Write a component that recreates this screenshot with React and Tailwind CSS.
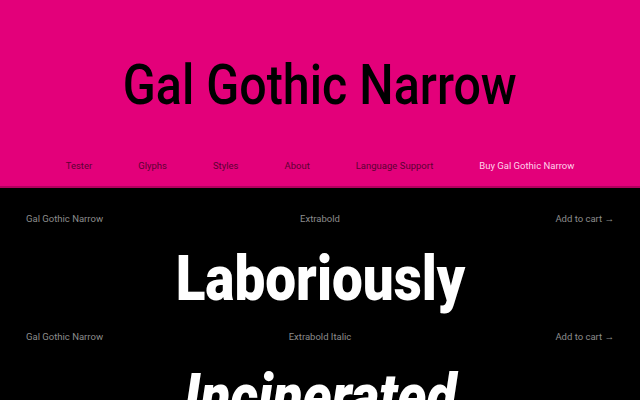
export default function App() {
  const roboto = { fontFamily: 'Roboto, "Liberation Sans", Arial, sans-serif' };
  const nav = ["Tester", "Glyphs", "Styles", "About", "Language Support"];
  const rows = [
    { style: "Extrabold", word: "Laboriously", italic: false },
    { style: "Extrabold Italic", word: "Incinerated", italic: true },
  ];
  return (
    <div className="w-[640px] h-[400px] overflow-hidden bg-black" style={roboto}>
      <header className="h-[188px] bg-[#e3007a] border-b-2 border-[#b0005e] flex flex-col items-center">
        <h1 className="mt-[58px] text-[55px] leading-none font-medium text-black">
          <span className="inline-block scale-x-[0.88] origin-center">Gal Gothic Narrow</span>
        </h1>
        <nav className="mt-[46px] flex gap-[46px] text-[9.5px] leading-[14px]">
          {nav.map((n) => (
            <span key={n} className="text-[#5c0033]">{n}</span>
          ))}
          <span className="text-[#ffd3ea]">Buy Gal Gothic Narrow</span>
        </nav>
      </header>
      <main className="flex flex-col pt-[24px]">
        {rows.map((r) => (
          <section key={r.word} className="flex flex-col mb-[20px]">
            <div className="grid grid-cols-3 px-[26px] text-[9.5px] leading-[14px] text-[#8c8c8c]">
              <span>Gal Gothic Narrow</span>
              <span className="text-center">{r.style}</span>
              <span className="text-right">Add to cart →</span>
            </div>
            <div
              className={`mt-[21px] text-center text-[63px] leading-none font-black text-white ${r.italic ? "italic" : ""}`}
            >
              <span className="inline-block scale-x-[0.87] origin-center">{r.word}</span>
            </div>
          </section>
        ))}
      </main>
    </div>
  );
}
